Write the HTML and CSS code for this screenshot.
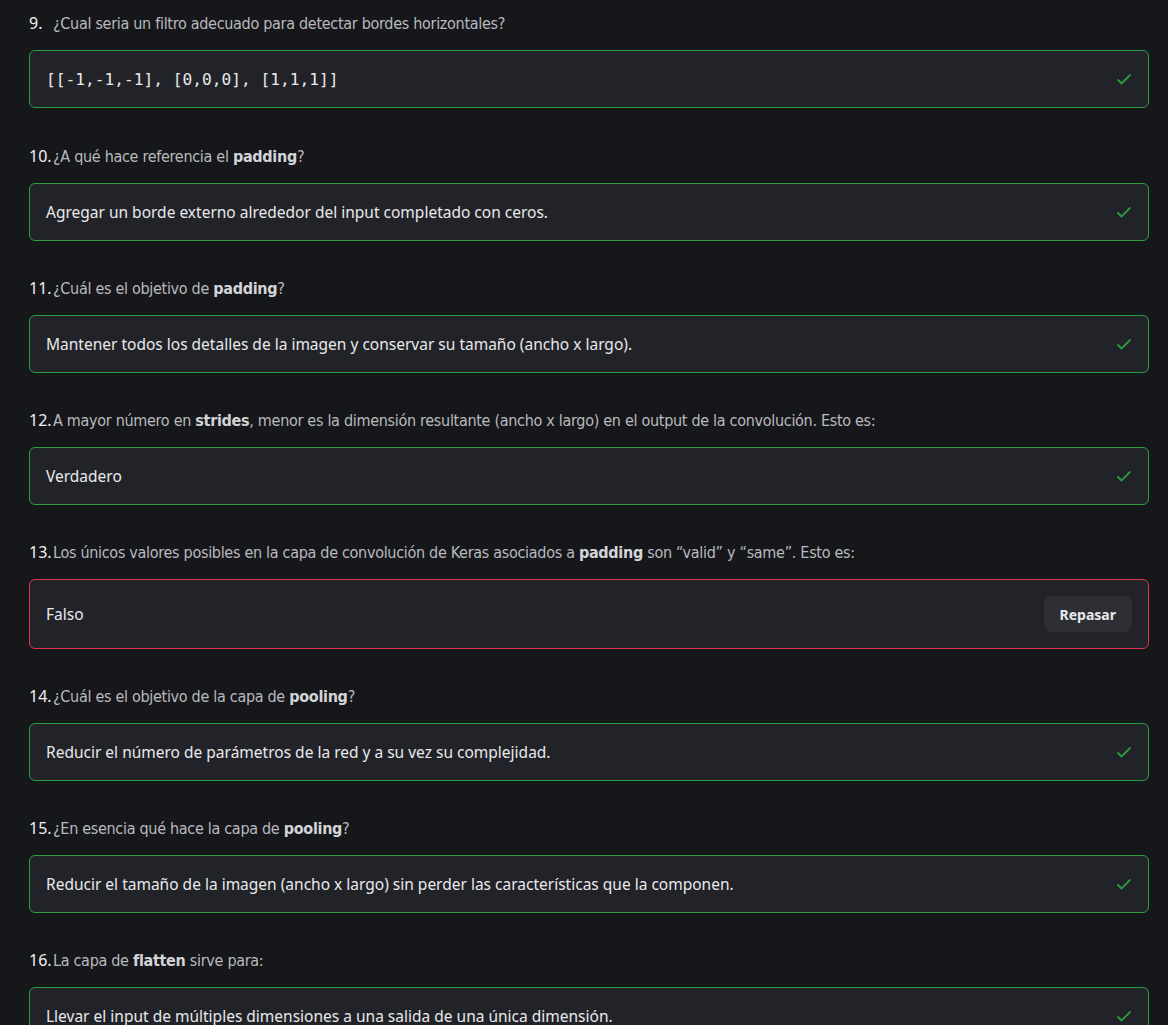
FILE: index.html
```html
<!DOCTYPE html>
<html lang="es">
<head>
<meta charset="utf-8">
<title>Quiz</title>
<link rel="stylesheet" href="styles.css">
</head>
<body>
<main class="quiz">
  <section class="item">
    <p class="q"><span class="num">9.</span><span class="qt">¿Cual seria un filtro adecuado para detectar bordes horizontales?</span></p>
    <div class="card ok"><code class="mono">[[-1,-1,-1], [0,0,0], [1,1,1]]</code><svg class="check" viewBox="0 0 16 12"><path d="M1.5 6.5 L5.5 10.5 L14.5 1.5"/></svg></div>
  </section>
  <section class="item">
    <p class="q"><span class="num">10.</span><span class="qt">¿A qué hace referencia el <b>padding</b>?</span></p>
    <div class="card ok"><span class="ans">Agregar un borde externo alrededor del input completado con ceros.</span><svg class="check" viewBox="0 0 16 12"><path d="M1.5 6.5 L5.5 10.5 L14.5 1.5"/></svg></div>
  </section>
  <section class="item">
    <p class="q"><span class="num">11.</span><span class="qt">¿Cuál es el objetivo de <b>padding</b>?</span></p>
    <div class="card ok"><span class="ans">Mantener todos los detalles de la imagen y conservar su tamaño (ancho x largo).</span><svg class="check" viewBox="0 0 16 12"><path d="M1.5 6.5 L5.5 10.5 L14.5 1.5"/></svg></div>
  </section>
  <section class="item">
    <p class="q"><span class="num">12.</span><span class="qt">A mayor número en <b>strides</b>, menor es la dimensión resultante (ancho x largo) en el output de la convolución. Esto es:</span></p>
    <div class="card ok"><span class="ans">Verdadero</span><svg class="check" viewBox="0 0 16 12"><path d="M1.5 6.5 L5.5 10.5 L14.5 1.5"/></svg></div>
  </section>
  <section class="item">
    <p class="q"><span class="num">13.</span><span class="qt">Los únicos valores posibles en la capa de convolución de Keras asociados a <b>padding</b> son “valid” y “same”. Esto es:</span></p>
    <div class="card bad"><span class="ans">Falso</span><button class="btn">Repasar</button></div>
  </section>
  <section class="item">
    <p class="q"><span class="num">14.</span><span class="qt">¿Cuál es el objetivo de la capa de <b>pooling</b>?</span></p>
    <div class="card ok"><span class="ans">Reducir el número de parámetros de la red y a su vez su complejidad.</span><svg class="check" viewBox="0 0 16 12"><path d="M1.5 6.5 L5.5 10.5 L14.5 1.5"/></svg></div>
  </section>
  <section class="item">
    <p class="q"><span class="num">15.</span><span class="qt">¿En esencia qué hace la capa de <b>pooling</b>?</span></p>
    <div class="card ok"><span class="ans">Reducir el tamaño de la imagen (ancho x largo) sin perder las características que la componen.</span><svg class="check" viewBox="0 0 16 12"><path d="M1.5 6.5 L5.5 10.5 L14.5 1.5"/></svg></div>
  </section>
  <section class="item">
    <p class="q"><span class="num">16.</span><span class="qt">La capa de <b>flatten</b> sirve para:</span></p>
    <div class="card ok"><span class="ans">Llevar el input de múltiples dimensiones a una salida de una única dimensión.</span><svg class="check" viewBox="0 0 16 12"><path d="M1.5 6.5 L5.5 10.5 L14.5 1.5"/></svg></div>
  </section>
</main>
</body>
</html>
```
FILE: styles.css
```css
html, body {
  margin: 0;
  padding: 0;
  background: #16171b;
}
body {
  font-family: "Noto Sans", "DejaVu Sans", sans-serif;
  color: #e6e7ea;
}
.quiz {
  padding: 11px 19px 0 29px;
  display: flex;
  flex-direction: column;
  gap: 35px;
}
.item {
  display: flex;
  flex-direction: column;
  gap: 15px;
}
.item:first-child {
  margin-bottom: 1px;
}
.q {
  margin: 0;
  display: flex;
  align-items: baseline;
  height: 24px;
  line-height: 24px;
  white-space: nowrap;
}
.num {
  min-width: 24px;
  font-size: 16px;
  color: #f0f0f2;
  font-family: "Noto Sans", sans-serif;
}
.qt {
  font-family: "DejaVu Sans Condensed", "Roboto", sans-serif;
  font-size: 16px;
  color: #b9babe;
  letter-spacing: -0.3px;
}
.qt b {
  color: #d3d4d7;
  font-weight: 700;
}
.card {
  box-sizing: border-box;
  height: 58px;
  border: 1px solid #2b9e40;
  border-radius: 6px;
  background: #222328;
  display: flex;
  align-items: center;
  justify-content: space-between;
  padding: 0 16px;
}
.card.bad {
  height: 70px;
  border-color: #e0334d;
}
.ans {
  font-size: 15.5px;
  color: #e8e9ec;
}
.mono {
  font-family: "DejaVu Sans Mono", monospace;
  font-size: 16.2px;
  color: #e8e9ec;
}
.check {
  width: 16px;
  height: 12px;
  fill: none;
  stroke: #2b9e40;
  stroke-width: 1.8;
}
.btn {
  border: none;
  background: #2e2f34;
  color: #e8e9ec;
  font-family: "Noto Sans", sans-serif;
  font-weight: 700;
  font-size: 14px;
  height: 36px;
  padding: 0 16px;
  border-radius: 8px;
}
```
